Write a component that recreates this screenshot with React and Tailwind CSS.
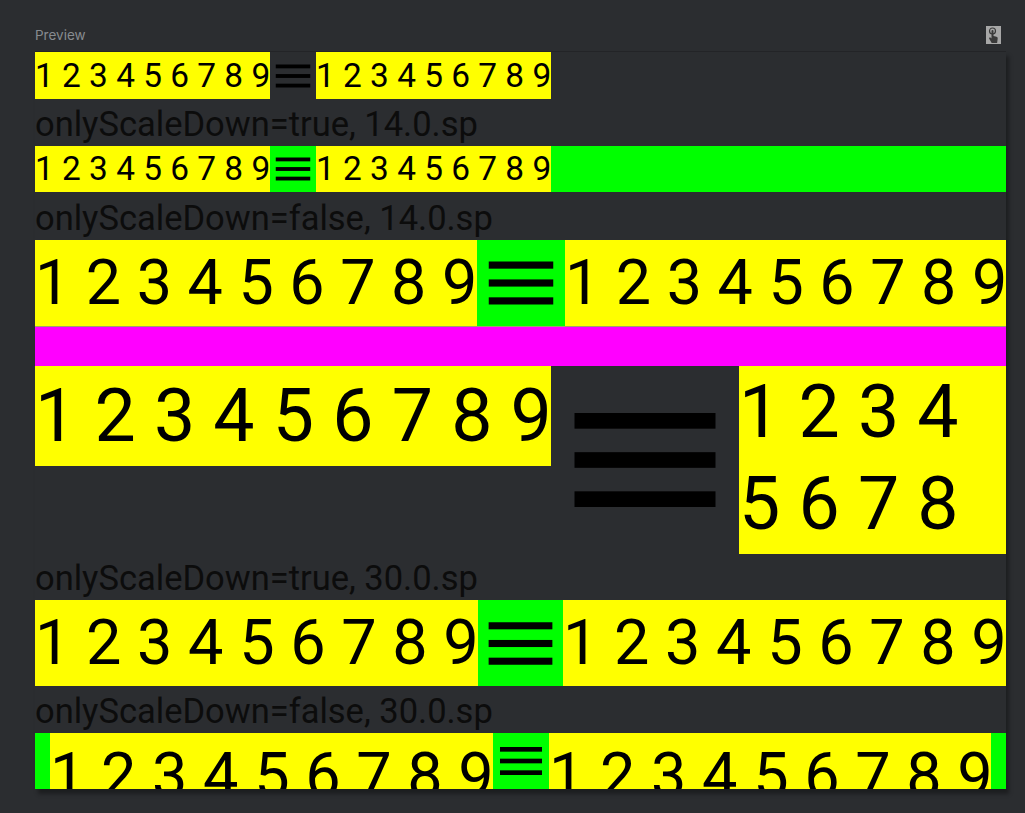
import React from 'react';

const digits = '1 2 3 4 5 6 7 8 9';

function MenuIcon({ className }) {
  return (
    <svg viewBox="0 0 24 24" className={className} fill="#000">
      <rect x="3" y="6" width="18" height="2" />
      <rect x="3" y="11" width="18" height="2" />
      <rect x="3" y="16" width="18" height="2" />
    </svg>
  );
}

function TouchIcon() {
  return (
    <svg viewBox="0 0 15 18" className="w-[15px] h-[18px]">
      <rect x="0" y="0" width="15" height="18" fill="#a7a7a7" />
      <circle cx="6.5" cy="5" r="3" fill="none" stroke="#3a3a3a" strokeWidth="1.2" />
      <path d="M5.5 5 a1 1 0 0 1 2 0 v5 l3 0.8 a1.5 1.5 0 0 1 1.2 1.6 l-0.6 4.6 h-5.4 l-2.6 -4.4 a0.9 0.9 0 0 1 1.4 -1 l1 1 z" fill="#3a3a3a" />
    </svg>
  );
}

function Label({ children, h }) {
  return (
    <div className={`${h} flex items-end pb-[2px] text-[34.5px] leading-[40px] text-[#0c0c0c] whitespace-nowrap`}>
      {children}
    </div>
  );
}

export default function App() {
  return (
    <div className="w-[1025px] h-[813px] bg-[#2b2d30] overflow-hidden" style={{ fontFamily: 'Roboto, "Noto Sans", sans-serif' }}>
      {/* Header */}
      <div className="h-[51px] pl-[35px] pr-[24px] flex items-start justify-between pt-[26px]">
        <span className="text-[13.5px] leading-[18px] text-[#878b8f]" style={{ fontFamily: 'Inter, "Noto Sans", sans-serif' }}>Preview</span>
        <TouchIcon />
      </div>

      {/* Preview panel */}
      <div className="ml-[35px] w-[971px] h-[738px] border-t border-[#232427] shadow-[3px_5px_4px_rgba(0,0,0,0.35)] flex flex-col">
        {/* onlyScaleDown=true, 14sp fits */}
        <div className="h-[47px] flex">
          <div className="w-[235px] bg-[#ffff00] text-[33.4px] leading-[47px] whitespace-nowrap overflow-hidden">{digits}</div>
          <div className="w-[46px] flex items-center justify-center"><MenuIcon className="w-[46px] h-[46px]" /></div>
          <div className="w-[235px] bg-[#ffff00] text-[33.4px] leading-[47px] whitespace-nowrap overflow-hidden">{digits}</div>
        </div>

        <Label h="h-[47px]">onlyScaleDown=true, 14.0.sp</Label>

        <div className="h-[46px] flex bg-[#00ff00]">
          <div className="w-[235px] bg-[#ffff00] text-[33.4px] leading-[46px] whitespace-nowrap overflow-hidden">{digits}</div>
          <div className="w-[46px] flex items-center justify-center"><MenuIcon className="w-[46px] h-[46px]" /></div>
          <div className="w-[235px] bg-[#ffff00] text-[33.4px] leading-[46px] whitespace-nowrap overflow-hidden">{digits}</div>
        </div>

        <Label h="h-[48px]">onlyScaleDown=false, 14.0.sp</Label>

        <div className="h-[86px] flex bg-[#00ff00]">
          <div className="w-[442px] bg-[#ffff00] text-[62.8px] leading-[86px] whitespace-nowrap overflow-hidden">{digits}</div>
          <div className="w-[88px] flex items-center justify-center"><MenuIcon className="w-[86px] h-[86px]" /></div>
          <div className="flex-1 bg-[#ffff00] text-[62.8px] leading-[86px] whitespace-nowrap overflow-hidden">{digits}</div>
        </div>

        <div className="h-[40px] bg-[#ff00ff] border-t border-[#a0a070]" />

        <div className="h-[188px] flex items-start">
          <div className="w-[516px] h-[100px] bg-[#ffff00] text-[73.4px] leading-[100px] whitespace-nowrap overflow-hidden">{digits}</div>
          <div className="w-[188px] h-[188px] shrink-0"><MenuIcon className="w-[188px] h-[188px]" /></div>
          <div className="flex-1 h-[188px] bg-[#ffff00] text-[73.4px] leading-[92px] overflow-hidden">{digits}</div>
        </div>

        <Label h="h-[46px]">onlyScaleDown=true, 30.0.sp</Label>

        <div className="h-[86px] flex bg-[#00ff00]">
          <div className="w-[443px] bg-[#ffff00] text-[63px] leading-[86px] whitespace-nowrap overflow-hidden">{digits}</div>
          <div className="w-[85px] flex items-center justify-center"><MenuIcon className="w-[85px] h-[85px]" /></div>
          <div className="flex-1 bg-[#ffff00] text-[63px] leading-[86px] whitespace-nowrap overflow-hidden">{digits}</div>
        </div>

        <Label h="h-[47px]">onlyScaleDown=false, 30.0.sp</Label>

        <div className="h-[56px] flex bg-[#00ff00] px-[15px] overflow-hidden">
          <div className="w-[443px] h-[56px] bg-[#ffff00] text-[63px] leading-[86px] whitespace-nowrap overflow-hidden">{digits}</div>
          <div className="w-[56px] flex items-center justify-center"><MenuIcon className="w-[56px] h-[56px]" /></div>
          <div className="flex-1 h-[56px] bg-[#ffff00] text-[63px] leading-[86px] whitespace-nowrap overflow-hidden">{digits}</div>
        </div>
      </div>
    </div>
  );
}
